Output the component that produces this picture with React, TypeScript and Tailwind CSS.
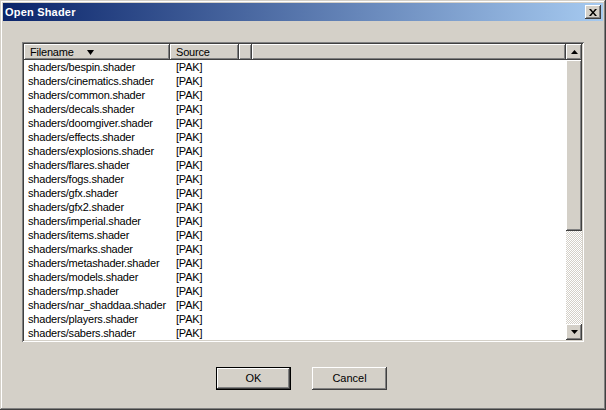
import React from 'react';

// shader files listed in the dialog
const FILES = [
  'bespin', 'cinematics', 'common', 'decals', 'doomgiver', 'effects', 'explosions',
  'flares', 'fogs', 'gfx', 'gfx2', 'imperial', 'items', 'marks', 'metashader',
  'models', 'mp', 'nar_shaddaa', 'players', 'sabers',
];

const raised =
  'shadow-[inset_-1px_-1px_#404040,inset_1px_1px_#fff,inset_-2px_-2px_#808080,inset_2px_2px_#d4d0c8]';

const HeaderCell: React.FC<{ width: string; children?: React.ReactNode }> = ({ width, children }) => (
  <div className={`${width} h-full shrink-0 bg-[#d4d0c8] ${raised} flex items-center pl-[6px]`}>
    {children}
  </div>
);

const Arrow: React.FC<{ down?: boolean; size?: number }> = ({ down, size = 4 }) => (
  <svg width="7" height={size} viewBox={`0 0 7 ${size}`} className="block">
    {down ? (
      <path d={`M0 0h7L3.5 ${size}z`} fill="#000" />
    ) : (
      <path d={`M0 ${size}h7L3.5 0z`} fill="#000" />
    )}
  </svg>
);

const App: React.FC = () => {
  return (
    <div
      className="w-[606px] h-[410px] bg-[#d4d0c8] p-[3px] flex flex-col text-black shadow-[inset_-1px_-1px_#404040,inset_1px_1px_#d4d0c8,inset_-2px_-2px_#808080,inset_2px_2px_#fff]"
      style={{ fontFamily: '"Liberation Sans", Arial, sans-serif' }}
    >
      {/* title bar */}
      <div className="h-[18px] flex items-center justify-between pl-[2px] pr-[2px] bg-[linear-gradient(to_right,#0a246a,#a6caf0)]">
        <span className="text-white text-[11px] font-bold leading-none tracking-[0.2px]">Open Shader</span>
        <button className={`w-[16px] h-[14px] bg-[#d4d0c8] ${raised} flex items-center justify-center`}>
          <svg width="8" height="7" viewBox="0 0 8 7" className="block">
            <path d="M0 0h2l2 2.5L6 0h2L5 3.5 8 7H6L4 4.5 2 7H0l3-3.5z" fill="#000" />
          </svg>
        </button>
      </div>

      {/* list view */}
      <div className="pl-[19px] pt-[21px]">
        <div className="w-[562px] h-[300px] bg-white p-[2px] flex shadow-[inset_1px_1px_#808080,inset_-1px_-1px_#fff,inset_2px_2px_#404040,inset_-2px_-2px_#d4d0c8]">
          <div className="flex-1 flex flex-col overflow-hidden tracking-[-0.2px]">
            <div className="h-[16px] flex shrink-0 text-[11px] leading-none">
              <HeaderCell width="w-[146px]">
                <span>Filename</span>
                <span className="ml-[13px]"><Arrow down size={5} /></span>
              </HeaderCell>
              <HeaderCell width="w-[69px]">Source</HeaderCell>
              <HeaderCell width="w-[13px]" />
              <div className={`flex-1 h-full bg-[#d4d0c8] ${raised}`} />
            </div>
            <div className="flex-1 overflow-hidden text-[11px]">
              {FILES.map((f) => (
                <div key={f} className="h-[14px] leading-[14px] flex">
                  <span className="w-[146px] pl-[4px] shrink-0">shaders/{f}.shader</span>
                  <span className="pl-[6px]">[PAK]</span>
                </div>
              ))}
            </div>
          </div>

          {/* scrollbar */}
          <div className="w-[16px] flex flex-col">
            <div className={`h-[16px] bg-[#d4d0c8] ${raised} flex items-center justify-center`}>
              <Arrow />
            </div>
            <div className={`h-[171px] bg-[#d4d0c8] ${raised}`} />
            <div className="flex-1 bg-[repeating-conic-gradient(#fff_0_25%,#d4d0c8_0_50%)] bg-[length:2px_2px]" />
            <div className={`h-[16px] bg-[#d4d0c8] ${raised} flex items-center justify-center`}>
              <Arrow down />
            </div>
          </div>
        </div>
      </div>

      {/* buttons */}
      <div className="flex gap-[21px] pl-[213px] pt-[25px] text-[11px]">
        <button className="w-[75px] h-[23px] bg-[#d4d0c8] border border-black shadow-[inset_-1px_-1px_#404040,inset_1px_1px_#fff,inset_-2px_-2px_#808080,inset_2px_2px_#d4d0c8]">
          OK
        </button>
        <button className={`w-[75px] h-[23px] bg-[#d4d0c8] ${raised}`}>Cancel</button>
      </div>
    </div>
  );
};

export default App;
